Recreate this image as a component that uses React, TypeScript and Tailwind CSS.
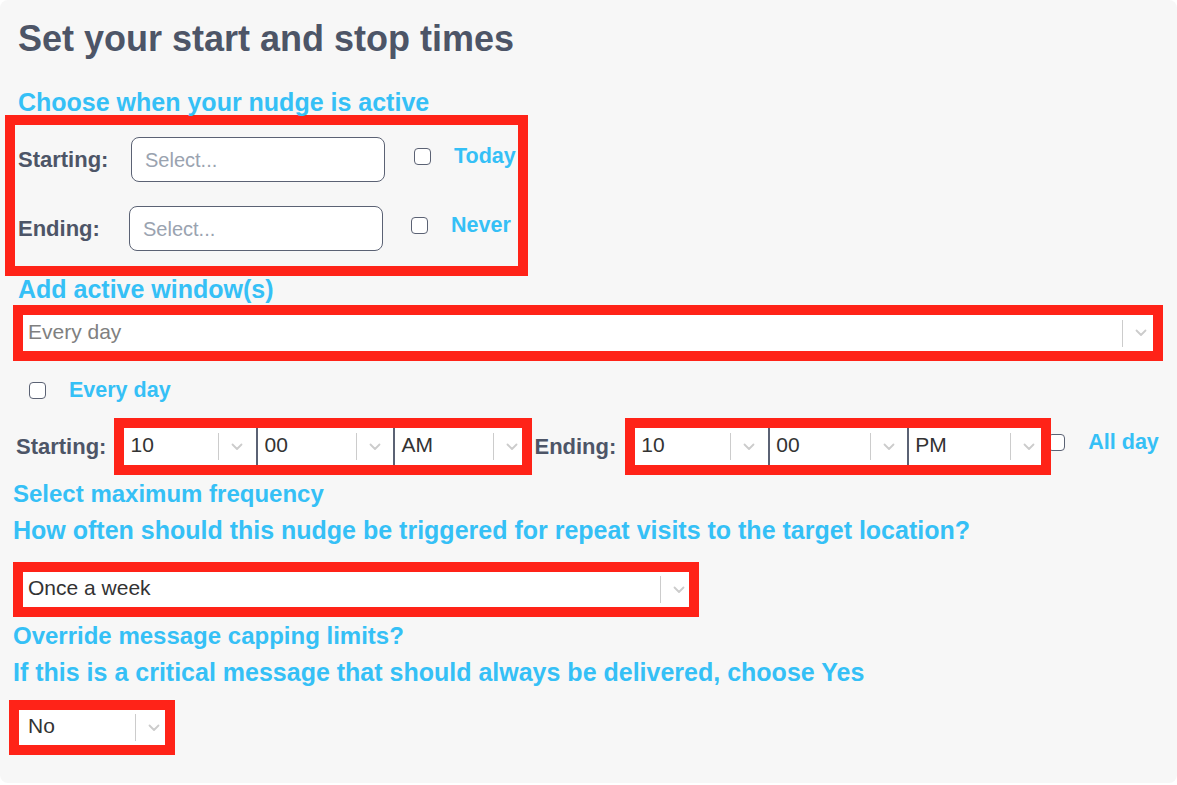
type SelectProps = {
  value: string;
  muted?: boolean;
  className: string;
  tail?: string;
  pad?: string;
  divider?: boolean;
};

function Chevron() {
  return (
    <svg width="12" height="8" viewBox="0 0 12 8" className="text-[#cccccc]">
      <path d="M1.5 1.5 6 6l4.5-4.5" fill="none" stroke="currentColor" strokeWidth="1.8" strokeLinecap="round" strokeLinejoin="round" />
    </svg>
  );
}

// react-select style control: value, separator, caret
function Select({ value, muted, className, tail = 'w-[37px]', pad = 'pl-[6px]', divider }: SelectProps) {
  return (
    <div className={`flex h-full items-center bg-white ${divider ? 'border-l-2 border-[#5b6274]' : ''} ${className}`}>
      <span className={`flex-1 truncate pb-[3px] text-[21px] ${pad} ${muted ? 'text-[#808080]' : 'text-[#333333]'}`}>{value}</span>
      <div className={`flex h-full shrink-0 items-center ${tail}`}>
        <div className="h-[27px] w-px bg-[#cccccc]" />
        <div className="pl-[12px]">
          <Chevron />
        </div>
      </div>
    </div>
  );
}

function Checkbox() {
  return <div className="h-[17px] w-[17px] shrink-0 rounded-[4px] border-[1.5px] border-[#5b6274] bg-white" />;
}

function DateRow({ label, labelWidth, gap, option }: { label: string; labelWidth: string; gap: string; option: string }) {
  return (
    <div className="flex h-[45px] items-center pl-[3px]">
      <span className={`${labelWidth} shrink-0 text-[22px] font-bold text-[#4d5567]`}>{label}</span>
      <div className="flex h-[45px] w-[254px] items-center rounded-[8px] border border-[#5b6274] bg-white pl-[13px] text-[20px] text-[#9aa3b0]">
        Select...
      </div>
      <div className={`mb-[6px] flex items-center gap-[23px] ${gap}`}>
        <Checkbox />
        <span className="text-[21.5px] font-bold text-[#35c0f6]">{option}</span>
      </div>
    </div>
  );
}

export default function App() {
  return (
    <div className="min-h-screen bg-white font-['Liberation_Sans',Arial,sans-serif]">
      <div className="h-[783px] rounded-lg bg-[#f7f7f7] pt-[19px]">
        <h1 className="pl-[18px] text-[36px] font-bold leading-[40px] text-[#4d5567]">Set your start and stop times</h1>

        {/* Date range */}
        <h2 className="mt-[30px] pl-[18px] text-[25px] font-bold leading-[26px] text-[#35c0f6]">Choose when your nudge is active</h2>
        <div className="ml-[5px] flex w-[523px] flex-col gap-[24px] border-[10px] border-[#ff2318] pt-[12px] pb-[15px]">
          <DateRow label="Starting:" labelWidth="w-[113px]" gap="ml-[29px]" option="Today" />
          <DateRow label="Ending:" labelWidth="w-[111px]" gap="ml-[28px]" option="Never" />
        </div>

        {/* Active windows */}
        <h2 className="pl-[18px] text-[25px] font-bold leading-[26px] text-[#35c0f6]">Add active window(s)</h2>
        <div className="ml-[13px] mt-[3px] h-[56px] w-[1150px] border-[10px] border-[#ff2318]">
          <Select value="Every day" muted pad="pl-[5px]" className="w-full" tail="w-[31px]" />
        </div>

        <div className="mt-[17px] flex h-[24px] items-center gap-[23px] pl-[29px]">
          <Checkbox />
          <span className="text-[21.5px] font-bold text-[#35c0f6]">Every day</span>
        </div>

        <div className="mt-[16px] flex h-[57px] items-center pl-[16px]">
          <span className="text-[22px] font-bold text-[#4d5567]">Starting:</span>
          <div className="ml-[8px] flex h-[57px] w-[418px] border-[10px] border-[#ff2318]">
            <Select value="10" className="w-[132px]" tail="w-[38px]" />
            <Select value="00" divider className="w-[137px]" tail="w-[37px]" />
            <Select value="AM" divider className="w-[129px]" tail="w-[29px]" />
          </div>
          <span className="ml-[2px] text-[22px] font-bold text-[#4d5567]">Ending:</span>
          <div className="relative z-10 ml-[9px] flex h-[57px] w-[426px] border-[10px] border-[#ff2318]">
            <Select value="10" className="w-[133px]" tail="w-[38px]" />
            <Select value="00" divider className="w-[139px]" tail="w-[37px]" />
            <Select value="PM" divider className="w-[134px]" tail="w-[31px]" />
          </div>
          <div className="-ml-[3px] mb-[8px]">
            <Checkbox />
          </div>
          <span className="mb-[8px] ml-[23px] text-[21.5px] font-bold text-[#35c0f6]">All day</span>
        </div>

        {/* Frequency */}
        <h2 className="mt-[6px] pl-[13px] text-[24px] font-bold leading-[26px] text-[#35c0f6]">Select maximum frequency</h2>
        <p className="mt-[10px] pl-[13px] text-[25px] font-bold leading-[26px] text-[#35c0f6]">
          How often should this nudge be triggered for repeat visits to the target location?
        </p>
        <div className="ml-[13px] mt-[19px] h-[55px] w-[686px] border-[10px] border-[#ff2318]">
          <Select value="Once a week" pad="pl-[5px]" className="w-full" tail="w-[29px]" />
        </div>

        {/* Capping */}
        <h2 className="mt-[6px] pl-[13px] text-[24px] font-bold leading-[26px] text-[#35c0f6]">Override message capping limits?</h2>
        <p className="mt-[10px] pl-[13px] text-[25px] font-bold leading-[26px] text-[#35c0f6]">
          If this is a critical message that should always be delivered, choose Yes
        </p>
        <div className="ml-[9px] mt-[15px] h-[55px] w-[166px] border-[10px] border-[#ff2318]">
          <Select value="No" pad="pl-[9px]" className="w-full" tail="w-[30px]" />
        </div>
      </div>
    </div>
  );
}
